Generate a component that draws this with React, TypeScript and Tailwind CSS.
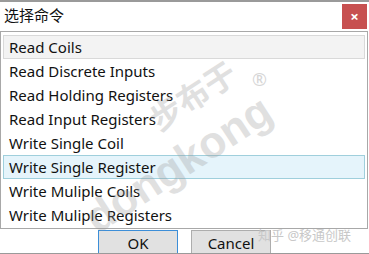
const COMMANDS = [
  'Read Coils',
  'Read Discrete Inputs',
  'Read Holding Registers',
  'Read Input Registers',
  'Write Single Coil',
  'Write Single Register',
  'Write Muliple Coils',
  'Write Muliple Registers',
];

export default function App() {
  return (
    <div
      className="relative w-[369px] h-[254px] overflow-hidden bg-white border-t-2 border-b border-[#9a9a9a] text-[#111]"
      style={{ fontFamily: '"Noto Sans", "Noto Sans CJK SC", sans-serif' }}
    >
      {/* title bar */}
      <div className="flex items-start justify-between h-[29px]">
        <div className="pl-[4px] pt-[3px] text-[15px] leading-[20px]">选择命令</div>
        <div className="mt-[2px] mr-[2px] w-[25px] h-[25px] bg-[#c75050] flex items-center justify-center text-white text-[15px] font-bold leading-none">
          ×
        </div>
      </div>

      {/* list */}
      <div className="mr-[1px] border border-[#a8a8a8] h-[198px] px-[2px] pt-[3px]">
        {COMMANDS.map((c, i) => {
          let cls = 'border border-transparent';
          if (i === 0) cls = 'border border-[#d9d9d9] bg-[#f3f3f3]';
          else if (i === 5) cls = 'border border-[#9fcfdc] bg-[#e5f4fb]';
          return (
            <div key={c} className={`h-[24px] flex items-center pl-[5px] text-[15px] ${cls}`}>
              {c}
            </div>
          );
        })}
      </div>

      {/* buttons */}
      <div className="flex pl-[98px] pt-[1px] gap-[13px]">
        <button className="w-[80px] h-[26px] border border-[#3c8ed8] bg-[#e1e1e1] text-[15px] leading-none">OK</button>
        <button className="w-[80px] h-[26px] border border-[#adadad] bg-[#e1e1e1] text-[15px] leading-none">Cancel</button>
      </div>

      {/* watermarks */}
      <div className="absolute left-[258px] top-[224px] text-[13px] text-[#c8c8c8] whitespace-nowrap">知乎 @移通创联</div>
      <div
        className="absolute left-[72px] top-[140px] text-[44px] font-bold text-[#9a9a9a] opacity-30 whitespace-nowrap leading-none -rotate-[33deg]"
        style={{ fontFamily: '"Liberation Sans", sans-serif' }}
      >
        dongkong
      </div>
      <div className="absolute left-[145px] top-[78px] text-[32px] font-bold text-[#9a9a9a] opacity-30 whitespace-nowrap leading-none -rotate-[33deg]">
        步布于
      </div>
      <div className="absolute left-[252px] top-[68px] text-[18px] text-[#9a9a9a] opacity-40 leading-none">®</div>
    </div>
  );
}
